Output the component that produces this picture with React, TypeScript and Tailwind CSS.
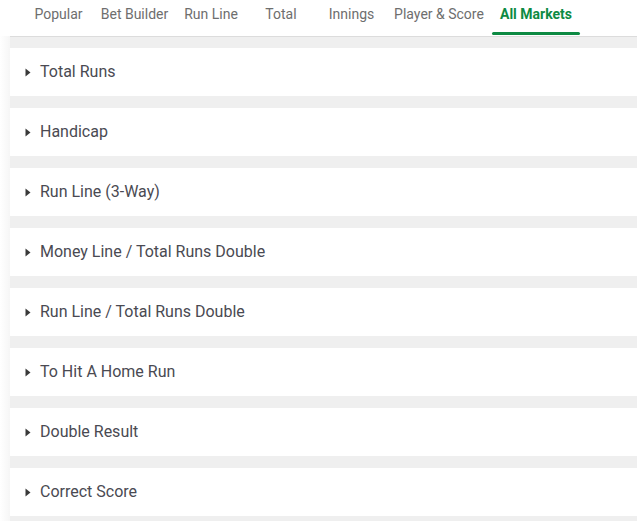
const TABS: { label: string; w: string; active?: boolean }[] = [
  { label: 'Popular', w: 'w-[67px]' },
  { label: 'Bet Builder', w: 'w-[85px]' },
  { label: 'Run Line', w: 'w-[68px]' },
  { label: 'Total', w: 'w-[72px]' },
  { label: 'Innings', w: 'w-[69px]' },
  { label: 'Player & Score', w: 'w-[106px]' },
  { label: 'All Markets', w: 'w-[88px]', active: true },
];

const MARKETS = [
  'Total Runs',
  'Handicap',
  'Run Line (3-Way)',
  'Money Line / Total Runs Double',
  'Run Line / Total Runs Double',
  'To Hit A Home Run',
  'Double Result',
  'Correct Score',
];

function Caret() {
  return (
    <svg width="6" height="9" viewBox="0 0 6 9" className="shrink-0">
      <path d="M0.5 0.5 L5.5 4.5 L0.5 8.5 Z" fill="#3a3a3a" />
    </svg>
  );
}

export default function App() {
  return (
    <div className="flex h-[521px] w-[637px] overflow-hidden bg-white font-['Roboto',sans-serif]">
      <div className="w-[10px] shrink-0 bg-gradient-to-r from-white to-[#f6f6f6]" />
      <div className="flex min-w-0 flex-1 flex-col bg-[#efefef]">
        <div className="-ml-[10px] flex h-[36px] shrink-0 bg-white pl-[25px]">
          {TABS.map((t) => (
            <div key={t.label} className={`${t.w} relative shrink-0 pt-[5px] text-center text-[14px] leading-[18px]`}>
              <span className={t.active ? 'font-bold text-[#0d8a43]' : 'text-[#6e6e6e]'}>{t.label}</span>
              {t.active && <div className="absolute bottom-[1px] left-0 right-0 h-[3px] rounded-full bg-[#0d8a43]" />}
            </div>
          ))}
        </div>
        <div className="h-px shrink-0 bg-[#dcdcdc]" />
        <div className="flex flex-col gap-[12px] pt-[11px]">
          {MARKETS.map((m) => (
            <div key={m} className="flex h-[48px] items-center gap-[9px] bg-white pl-[15px]">
              <Caret />
              <span className="text-[16px] text-[#4a4a52]">{m}</span>
            </div>
          ))}
        </div>
      </div>
    </div>
  );
}
